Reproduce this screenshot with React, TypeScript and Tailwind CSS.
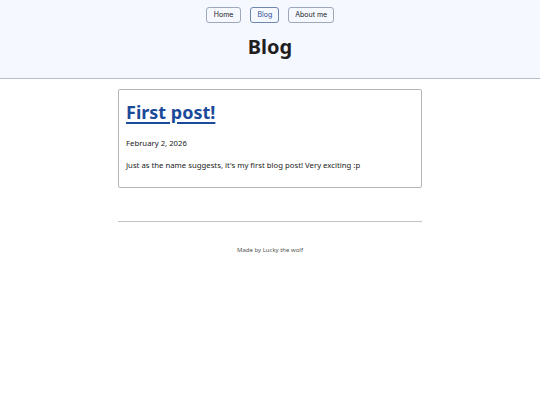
export default function App() {
  return (
    <div className="min-h-screen bg-white font-['Noto_Sans',sans-serif] text-[#222]">
      <header className="border-b border-[#b9bcc4] bg-[#f5f8ff] pb-[17px] pt-[7px]">
        <nav className="flex justify-center gap-[9px] font-['Inter',sans-serif] text-[7px]">
          <a className="flex h-[16px] items-center rounded-[3px] border border-[#9ea8b8] px-[7px] text-[#222]">
            Home
          </a>
          <a className="flex h-[16px] items-center rounded-[3px] border border-[#6f86b0] px-[6px] text-[#2d4f8f]">
            Blog
          </a>
          <a className="flex h-[16px] items-center rounded-[3px] border border-[#9ea8b8] px-[6px] text-[#222]">
            About me
          </a>
        </nav>
        <h1 className="mt-[10px] text-center text-[20px] font-bold leading-[28px] text-[#1f1f1f]">
          Blog
        </h1>
      </header>

      <main className="mx-auto mt-[10px] w-[304px]">
        <article className="rounded-[2px] border border-[#b4b4b8] px-[7px] pb-[16px] pt-[9px]">
          <h2 className="text-[18px] font-bold leading-[26px]">
            <a className="text-[#1b4a9a] underline decoration-[1.5px] underline-offset-[3px]">
              First post!
            </a>
          </h2>
          <p className="mt-[12px] text-[7.75px] leading-[12px]">February 2, 2026</p>
          <p className="mt-[10px] text-[7.75px] leading-[12px]">
            Just as the name suggests, it's my first blog post! Very exciting :p
          </p>
        </article>

        <hr className="mt-[33px] border-[#c4c4c4]" />
        <footer className="mt-[24px] text-center text-[6px] leading-[8px] text-[#555]">
          Made by Lucky the wolf
        </footer>
      </main>
    </div>
  );
}
